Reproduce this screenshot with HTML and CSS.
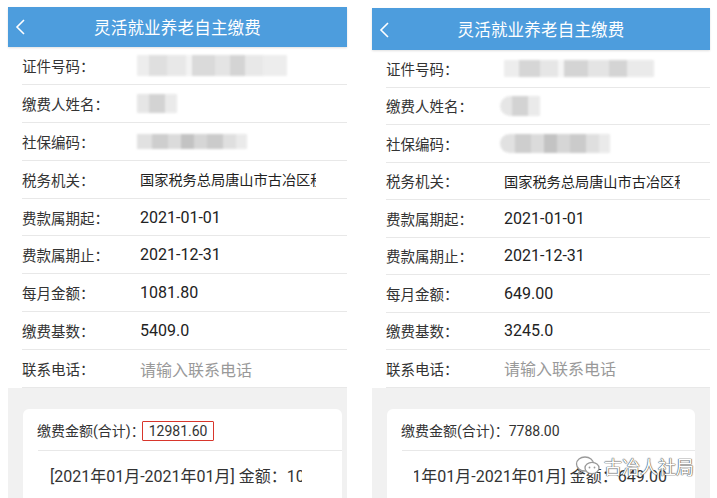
FILE: index.html
```html
<!DOCTYPE html>
<html lang="zh-CN">
<head>
    <meta charset="UTF-8">
    <meta name="viewport" content="width=device-width, initial-scale=1.0">
    <title>灵活就业养老自主缴费</title>
    <link rel="stylesheet" href="styles.css">
</head>
<body>
    <div class="page">
        <!-- 左侧截图 -->
        <div class="phone phone-left">
            <div class="topbar">
                <svg class="back" width="12" height="18" viewBox="0 0 12 18"><polyline points="9,2 2,9 9,16" fill="none" stroke="#fff" stroke-width="1.6"/></svg>
                <span class="title">灵活就业养老自主缴费</span>
            </div>
            <div class="rows">
                <div class="row"><span class="label">证件号码：</span><span class="mask mask-id"></span></div>
                <div class="row"><span class="label">缴费人姓名：</span><span class="mask mask-name"></span></div>
                <div class="row"><span class="label">社保编码：</span><span class="mask mask-code"></span></div>
                <div class="row"><span class="label">税务机关：</span><span class="value clip">国家税务总局唐山市古冶区税务局</span></div>
                <div class="row"><span class="label">费款属期起：</span><span class="value">2021-01-01</span></div>
                <div class="row"><span class="label">费款属期止：</span><span class="value">2021-12-31</span></div>
                <div class="row"><span class="label">每月金额：</span><span class="value">1081.80</span></div>
                <div class="row"><span class="label">缴费基数：</span><span class="value">5409.0</span></div>
                <div class="row"><span class="label">联系电话：</span><span class="value placeholder">请输入联系电话</span></div>
            </div>
            <div class="summary">
                <div class="card">
                    <div class="total">缴费金额(合计)：<span class="hl">12981.60</span></div>
                    <div class="detail">
                        <div class="detail-view"><span class="detail-text">[2021年01月-2021年01月] 金额：1081.80</span></div>
                    </div>
                </div>
            </div>
        </div>

        <!-- 右侧截图 -->
        <div class="phone phone-right">
            <div class="topbar">
                <svg class="back" width="12" height="18" viewBox="0 0 12 18"><polyline points="9,2 2,9 9,16" fill="none" stroke="#fff" stroke-width="1.6"/></svg>
                <span class="title">灵活就业养老自主缴费</span>
            </div>
            <div class="rows">
                <div class="row"><span class="label">证件号码：</span><span class="mask mask-id"></span></div>
                <div class="row"><span class="label">缴费人姓名：</span><span class="mask mask-name"></span></div>
                <div class="row"><span class="label">社保编码：</span><span class="mask mask-code"></span></div>
                <div class="row"><span class="label">税务机关：</span><span class="value clip">国家税务总局唐山市古冶区税务局</span></div>
                <div class="row"><span class="label">费款属期起：</span><span class="value">2021-01-01</span></div>
                <div class="row"><span class="label">费款属期止：</span><span class="value">2021-12-31</span></div>
                <div class="row"><span class="label">每月金额：</span><span class="value">649.00</span></div>
                <div class="row"><span class="label">缴费基数：</span><span class="value">3245.0</span></div>
                <div class="row"><span class="label">联系电话：</span><span class="value placeholder">请输入联系电话</span></div>
            </div>
            <div class="summary">
                <div class="card">
                    <div class="total">缴费金额(合计)：7788.00</div>
                    <div class="detail">
                        <div class="detail-view"><span class="detail-text">[2021年01月-2021年01月] 金额：649.00</span></div>
                    </div>
                </div>
            </div>
        </div>

        <div class="watermark">
            <svg width="26" height="22" viewBox="0 0 26 22">
                <ellipse cx="10" cy="9" rx="8.5" ry="7" fill="none" stroke="#9a9a9a" stroke-width="1.3"/>
                <path d="M5 15 L3.5 18.5 L8.5 15.8" fill="none" stroke="#9a9a9a" stroke-width="1.3"/>
                <ellipse cx="17" cy="13" rx="7" ry="5.6" fill="#fff" stroke="#9a9a9a" stroke-width="1.3"/>
                <circle cx="14.5" cy="12.5" r="0.9" fill="#9a9a9a"/>
                <circle cx="19.5" cy="12.5" r="0.9" fill="#9a9a9a"/>
            </svg>
            <span>古冶人社局</span>
        </div>
    </div>
</body>
</html>
```

FILE: styles.css
```css
body {
    margin: 0;
    background: #fff;
    font-family: Roboto, "Noto Sans CJK SC", sans-serif;
    color: #222;
}
.page {
    position: relative;
    display: flex;
    align-items: flex-start;
    gap: 25px;
    height: 498px;
    padding: 7px 0 0 8px;
    box-sizing: border-box;
    overflow: hidden;
}
.phone {
    display: flex;
    flex-direction: column;
    background: #fff;
}
.phone-left {
    width: 339px;
}
.phone-right {
    width: 338px;
    margin-top: 1px;
}
.topbar {
    position: relative;
    display: flex;
    align-items: center;
    justify-content: center;
    flex-shrink: 0;
    height: 40px;
    background: #4d9ddd;
    color: #fff;
    box-shadow: 0 1px 2px rgba(0, 0, 0, 0.12);
}
.phone-right .topbar {
    height: 42px;
}
.back {
    position: absolute;
    left: 7px;
    top: 11px;
}
.phone-right .back {
    top: 13px;
}
.title {
    font-size: 16.5px;
    letter-spacing: 0.2px;
}
.rows {
    flex-shrink: 0;
}
.row {
    display: flex;
    align-items: center;
    height: 37.9px;
    margin-left: 14px;
    border-bottom: 1px solid #e8e8e8;
    box-sizing: border-box;
}
.phone-right .row {
    height: 37.5px;
}
.label {
    width: 118px;
    flex-shrink: 0;
    font-size: 14.5px;
    color: #333;
}
.value {
    font-size: 16px;
    color: #222;
}
.value.clip {
    width: 176px;
    font-size: 14.2px;
    white-space: nowrap;
    overflow: hidden;
}
.placeholder {
    color: #999;
}
.mask {
    display: block;
    margin-left: -3px;
    filter: blur(1.3px);
    opacity: 0.9;
}
.mask-id {
    width: 150px;
    height: 21px;
    background: linear-gradient(90deg, #ececec 0 8%, #dcdcdc 8% 20%, #e6e6e6 20% 33%, #f2f2f2 33% 37%, #d6d6d6 37% 52%, #e2e2e2 52% 62%, #d0d0d0 62% 72%, #e6e6e6 72% 84%, #ececec 84% 100%);
}
.mask-name {
    width: 40px;
    height: 19px;
    background: linear-gradient(90deg, #e4e4e4 0 30%, #cfcfcf 30% 70%, #e8e8e8 70% 100%);
}
.mask-code {
    width: 110px;
    height: 15px;
    background: linear-gradient(90deg, #dedede 0 14%, #c9c9c9 14% 28%, #d8d8d8 28% 40%, #bdbdbd 40% 52%, #d2d2d2 52% 64%, #c6c6c6 64% 78%, #dcdcdc 78% 90%, #e8e8e8 90% 100%);
}
.phone-right .mask-id {
    height: 17px;
    margin-left: 0;
    background: linear-gradient(90deg, #ececec 0 10%, #d2d2d2 10% 24%, #e4e4e4 24% 36%, #f4f4f4 36% 40%, #d0d0d0 40% 56%, #e2e2e2 56% 70%, #d0d0d0 70% 82%, #e8e8e8 82% 100%);
}
.phone-right .mask-name {
    height: 20px;
    border-radius: 10px 0 0 10px;
    margin-left: -4px;
}
.phone-right .mask-code {
    height: 19px;
    width: 110px;
    margin-left: -4px;
    border-radius: 10px 0 0 10px;
}
.summary {
    background: #f1f1f1;
    padding-top: 21px;
    height: 140px;
}
.card {
    background: #fff;
    border-radius: 6px;
    margin: 0 5px 0 15px;
    height: 200px;
    color: #333;
}
.phone-right .card {
    margin: 0 15px;
}
.total {
    font-size: 14px;
    line-height: 20px;
    padding: 12px 0 9px 14px;
}
.hl {
    padding: 2px 7px;
    margin: 0 -7px 0 -3px;
    outline: 1.6px solid #d8362c;
    outline-offset: -1px;
    border-radius: 1px;
}
.detail {
    margin-left: 15px;
    border-top: 1px solid #e8e8e8;
    padding: 16px 40px 0 12px;
}
.phone-right .detail {
    padding-right: 28px;
}
.detail-view {
    display: flex;
    overflow: hidden;
    white-space: nowrap;
    font-size: 16px;
    line-height: 20px;
}
.phone-right .detail-view {
    justify-content: flex-end;
}
.detail-text {
    flex-shrink: 0;
}
.watermark {
    position: absolute;
    left: 575px;
    top: 453px;
    display: flex;
    align-items: center;
    gap: 3px;
    font-size: 18px;
    color: #fff;
    text-shadow: 0 0 1px #555, 0 0 1px #555, 0 0 1px #555;
}
```
